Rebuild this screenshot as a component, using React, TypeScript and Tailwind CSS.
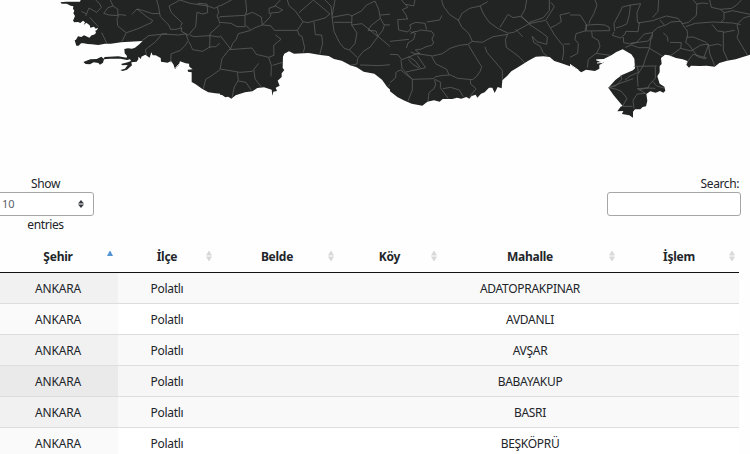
const shores = [
  {
    move: 'translate(50 0) scale(.33333)',
    land: 'M92 0L90 5 48 5 31 7 35 11 50 11 62 17 70 19 69 26 73 32 70 40 75 48 69 62 73 67 84 66 91 69 99 62 105 67 101 75 109 68 119 76 121 83 132 80 137 86 144 83 141 90 136 92 138 99 132 104 125 106 118 113 102 106 94 111 84 109 78 119 74 121 79 137 86 137 93 130 101 130 113 132 125 133 145 135 165 131 183 131 213 127 278 123 268 133 255 143 246 146 234 145 223 147 224 160 231 168 230 173 205 169 164 171 161 176 154 170 140 177 121 178 100 186 107 192 120 193 131 187 145 189 150 194 159 188 162 178 180 176 212 176 231 180 240 178 243 183 233 187 213 192 217 196 233 195 225 206 211 210 218 213 231 209 246 196 244 187 260 185 265 178 265 170 273 177 274 170 286 164 299 173 304 157 308 166 317 166 332 174 333 185 353 188 363 183 370 193 375 207 386 196 390 184 407 190 417 191 418 200 428 208 413 209 414 215 425 217 425 246 437 253 456 266 475 277 496 280 511 281 526 292 540 289V0Z',
    cuts: [
      'M386 193L377 204',
    ],
    lines: [
      'M137 0L149 11 154 22 140 37 117 24 107 48', 'M181 0L189 18 174 23 161 40 177 45 206 47 201 57 203 77 219 91 229 98 216 124', 'M189 18L204 28 203 43 228 46', 'M94 34L110 42', 'M119 52L145 80', 'M155 98L171 131', 'M230 98L264 86 304 68 308 61 295 54 261 27 246 43', 'M261 27L277 31 308 41 329 40 331 50 356 75 362 88 378 88 396 83 393 93 415 106 437 80 441 37 458 42 473 38 471 12 443 10', 'M320 0L325 17 329 40', 'M357 18L390 0 420 10 473 18 493 25 502 21 506 38 501 48 511 73 480 101 479 144', 'M357 18L364 38 397 69 391 80', 'M511 73L540 99', 'M506 52L540 53', 'M502 21L522 8', 'M275 123L296 107 351 101', 'M290 164L286 150 292 144 317 125 336 102 386 105 409 101', 'M408 102L415 122 405 137 391 151 363 162 362 187', 'M420 105L431 110 480 107 527 114', 'M417 125L428 149 458 154 479 141 497 140 511 129 529 145 531 177 516 205 482 229 467 238 460 266', 'M516 205L540 209',
    ],
  },
  {
    move: 'translate(220 0) scale(.33333)',
    land: 'M0 0H540V294L520 278 501 260 486 239 463 221 431 215 410 202 391 196 365 182 342 177 326 168 301 165 266 159 222 161 207 154 193 161 189 170 188 204 193 210 185 220 185 231 173 242 179 257 167 263 171 273 160 275 157 287 155 269 132 262 112 264 97 274 75 277 47 286 34 296 17 285 0 284Z',
    cuts: [],
    lines: [
      'M0 18L35 0', 'M0 50L75 46 75 80 51 80 33 70 0 67', 'M77 0L80 33 76 45 98 37 124 51 127 75 105 83 89 92 55 101 48 119 38 130 32 147 0 106', 'M77 76L91 89', 'M127 75L151 50 153 39 176 37 188 30 165 17 181 0', 'M127 75L152 77 163 91 232 91 249 65 226 33 207 17 202 0', 'M148 42L147 25 167 18', 'M232 91L238 106 246 109 254 143 250 157', 'M249 65L264 68 315 54 330 42 280 0 236 39', 'M282 66L286 104 305 105 308 130 299 164', 'M315 0L333 18 336 46', 'M345 0L336 49 342 94 358 127 373 145 388 150 405 131 411 99 395 75 396 48 385 43 335 52', 'M395 48L424 33 440 15 465 3', 'M396 67L342 67', 'M395 75L426 71 474 110', 'M465 3L476 28 481 55 454 76 444 91 468 93 474 109 488 91 493 76 481 55', 'M481 45L530 41', 'M493 74L523 76 518 90 533 94 540 60', 'M474 109L511 140 513 194', 'M474 109L451 141 430 154 413 175 411 192 390 196', 'M388 150L412 172', 'M420 195L455 196 474 197 513 194', 'M540 216L525 238 504 260', 'M27 149L96 144 109 163 146 172 162 166 161 136 183 118 166 104', 'M27 149L6 176 0 207 60 217 97 214 116 190', 'M146 172L154 196 153 229', 'M158 196L188 187', 'M52 217L55 240 43 261 36 293', 'M55 243L78 247 94 271', 'M102 211L105 237 125 262',
    ],
  },
  {
    move: 'translate(390 0) scale(.33333)',
    land: 'M0 0H540V199L512 189 493 183 479 171 460 169 437 170 415 182 384 202 364 214 352 227 337 241 335 265 323 261 314 279 307 263 297 263 284 277 273 281 262 293 257 284 245 288 238 296 229 291 214 296 201 293 187 297 158 297 149 305 132 301 112 305 97 317 65 311 41 301 22 291 0 274Z',
    cuts: ['M276 288L281 284'],
    lines: [
      'M35 0L53 22 37 29 47 43 53 57 23 59 26 90 53 96 63 84 59 75 77 67 105 70 110 89', 'M75 0L71 18 47 13', 'M61 102L72 95 83 94 91 90 125 94 132 104 126 117 131 129 125 136 108 140 95 147 76 150 90 161 77 162 62 156', 'M110 66L149 60 156 46', 'M61 95L76 100 71 118 54 129 49 144', 'M155 0L160 18 178 43 207 62', 'M270 18L239 25 217 39 205 61 215 81 236 100 247 124 277 127 309 110 354 103', 'M270 18L293 5', 'M270 18L281 43 298 67 323 85 353 99', 'M330 82L354 43 369 53 392 49 415 68', 'M410 0L405 28 394 48 417 71 467 61 493 20 483 7', 'M416 68L460 53 478 31 478 0', 'M353 103L346 119 349 142 371 158 390 173 404 188', 'M353 100L371 97 416 72 454 97 472 111 470 133 441 125 427 109 431 127 451 139 459 158 473 170', 'M377 88L398 110', 'M469 63L493 104 510 126 520 138 521 157 517 181', 'M482 83L497 76 514 65 510 45 540 38', 'M521 132L540 132', 'M247 124L234 133 208 136 180 145 157 161 128 168 81 161 57 171 35 179 24 164 0 163', 'M235 134L250 160 275 200 271 213 259 230 247 239 203 235 181 225 160 226 137 230 130 236 67 238 36 205 33 180', 'M285 140L291 157 337 211 337 239', 'M125 169L137 191 170 208 177 224', 'M55 170L75 182 91 203', 'M55 178L68 193 87 204', 'M82 167L107 203 48 216', 'M20 215L32 210 67 238 67 270 54 303', 'M133 237L152 247 151 263 175 296', 'M134 240L137 253 132 266 117 278 114 303', 'M159 266L182 262 208 270 220 290', 'M241 240L242 252 258 266 238 292', 'M0 124L57 118', 'M18 216L17 233 0 248',
    ],
  },
  {
    move: 'translate(570 0) scale(.33333)',
    land: 'M0 0H540V164L497 178 471 182 448 189 434 200 410 197 389 198 363 197 357 203 349 194 354 184 338 178 318 174 297 166 285 164 273 174 275 192 269 198 269 217 262 229 269 251 283 260 286 272 280 278 270 273 257 278 241 274 229 282 232 302 228 319 218 321 211 328 195 328 189 335 189 353 178 346 156 342 160 333 142 334 152 320 158 318 131 286 115 263 136 240 156 225 189 211 195 205 193 176 184 163 158 148 139 156 124 166 101 177 78 179 89 185 102 187 88 195 88 206 75 213 48 209 34 217 24 210 0 194Z',
    cuts: ['M0 193L26 211', 'M79 180L99 180M81 189L99 187'],
    lines: [
      'M0 45L30 45 50 75 45 93 18 101 15 119 25 130 23 160 0 172', 'M75 0L81 15 72 40 59 63 57 71', 'M45 76L81 73 104 75 117 81 119 92 45 93', 'M65 94L67 111 85 121 90 139 81 158 55 178 52 203', 'M50 76L49 91', 'M78 160L122 166', 'M134 93L132 70 147 42 157 21 182 15 212 11 201 37 202 66 208 69 204 95 169 94', 'M181 15L178 44 171 71 155 79 138 84', 'M204 69L248 62 268 55 289 48 324 55 337 71 356 67 379 46 381 12 397 9 414 11', 'M266 0L264 34 248 52', 'M270 60L284 76 263 83 248 96 245 118', 'M133 95L127 106 152 114 165 102 168 93', 'M160 111L161 128 182 132 200 127 223 102 247 98', 'M247 104L235 123 182 130', 'M166 142L185 135 205 143 235 143 277 168', 'M242 116L239 143 227 174 220 197 211 211 202 226 204 260', 'M191 199L260 198', 'M202 200L205 217 180 228 165 240', 'M153 225L155 239 138 257 116 263 140 268 154 274 171 295 158 318', 'M117 263L150 250 190 236', 'M256 199L256 235 238 254 234 264 202 266 227 280 202 282 189 301 192 325', 'M249 245L260 258 282 264', 'M159 319L187 319', 'M208 270L228 264 256 265', 'M333 64L344 84 351 90 353 104 347 128 356 134 374 158 382 170 407 177', 'M330 64L303 66 284 77', 'M347 80L376 70 430 66 488 69 512 74', 'M280 99L292 110 294 125', 'M300 127L334 128 332 145 300 168', 'M332 145L363 153 393 135 416 133 402 172', 'M350 112L369 111 392 120 406 126 418 137 445 132 455 137', 'M370 0L381 13', 'M419 0L424 22 451 28 462 37 462 58 453 66', 'M451 28L485 25 500 15 514 0', 'M462 38L488 32 540 43', 'M426 73L442 93 460 95 460 151 473 180', 'M501 74L506 97 501 113 519 143 533 166', 'M502 72L521 54 540 48', 'M416 137L419 160 434 197', 'M461 97L494 91', 'M350 188L369 163 411 174',
    ],
  },
];

function CoastMap() {
  return (
    <svg className="block h-[130px] w-full shrink-0" viewBox="0 0 750 130" role="img">
      {shores.map((s) => (
        <g key={s.move} transform={s.move}>
          <path d={s.land} fill="#222423" />
          <path d={s.lines.join('')} fill="none" stroke="#646665" strokeWidth="2.1" strokeLinejoin="round" />
          {s.cuts.map((c) => (
            <path key={c} d={c} fill="none" stroke="#fefefe" strokeWidth="3" />
          ))}
        </g>
      ))}
    </svg>
  );
}

const columns = ['Şehir', 'İlçe', 'Belde', 'Köy', 'Mahalle', 'İşlem'];
const districts = ['ADATOPRAKPINAR', 'AVDANLI', 'AVŞAR', 'BABAYAKUP', 'BASRI', 'BEŞKÖPRÜ'];
const grid = 'grid w-[741px] grid-cols-[120px_98px_122px_103px_178px_120px]';

function SortMark({ active }: { active: boolean }) {
  return active ? (
    <svg className="absolute top-[8px] right-[5px] h-[5px] w-[6px]" viewBox="0 0 6 5">
      <path d="M0 5L2.6 0H3.4L6 5Z" fill="#5195d5" />
    </svg>
  ) : (
    <svg className="absolute top-[8px] right-[4px] h-[10px] w-[6px]" viewBox="0 0 6 10">
      <path d="M0 4.5L2.6 0H3.4L6 4.5ZM0 5.5H6L3.4 10H2.6Z" fill="#d8d8d8" />
    </svg>
  );
}

function rowColors(i: number) {
  if (i === 3) return ['bg-[#f6f6f6]', 'bg-[#eaeaea]'];
  return i % 2 ? ['bg-white', 'bg-[#fafafa]'] : ['bg-[#f9f9f9]', 'bg-[#f1f1f1]'];
}

export default function App() {
  return (
    <div className="flex h-[454px] w-[750px] flex-col overflow-hidden bg-[#fefefe] font-['Noto_Sans','Open_Sans',sans-serif] text-[12px] leading-[18px] text-[#212529]">
      <CoastMap />
      <div className="mt-[45px] flex h-[68px] shrink-0 justify-between pr-[9px]">
        <label className="-ml-[3px] flex w-[97px] flex-col items-center">
          <span className="h-[17px] tracking-[-0.35px]">Show</span>
          <span className="flex h-[24px] w-full items-center justify-between rounded-[3px] border border-[#a6a6a6] bg-white pr-[9px] pl-[4px] text-[11px] text-[#5c6066]">
            10
            <svg className="h-[8px] w-[6px]" viewBox="0 0 6 8">
              <path d="M0 3.4L3 0 6 3.4ZM0 4.6H6L3 8Z" fill="#343a40" />
            </svg>
          </span>
          <span className="tracking-[-0.4px]">entries</span>
        </label>
        <label className="flex w-[134px] flex-col items-end">
          <span className="h-[17px] pr-[2px] tracking-[-0.4px]">Search:</span>
          <input className="h-[24px] w-full rounded-[3px] border border-[#a6a6a6] bg-white" />
        </label>
      </div>
      <div className="-ml-[2px] shrink-0">
        <div className={`${grid} h-[30px] border-b border-[#111] font-bold`}>
          {columns.map((c, i) => (
            <div key={c} className="relative text-center leading-[28px] tracking-[-0.25px]">
              {c}
              <SortMark active={i === 0} />
            </div>
          ))}
        </div>
        {districts.map((d, i) => {
          const [bg, sorted] = rowColors(i);
          return (
            <div key={d} className={`${grid} ${bg} ${i ? 'h-[31px] border-t border-[#ddd]' : 'h-[30px]'} text-center leading-[31px] tracking-[-0.3px]`}>
              <div className={`h-[30px] tracking-[-0.2px] ${sorted}`}>ANKARA</div>
              <div className="h-[30px]">Polatlı</div>
              <div />
              <div />
              <div className="h-[30px]">{d}</div>
              <div />
            </div>
          );
        })}
      </div>
    </div>
  );
}
